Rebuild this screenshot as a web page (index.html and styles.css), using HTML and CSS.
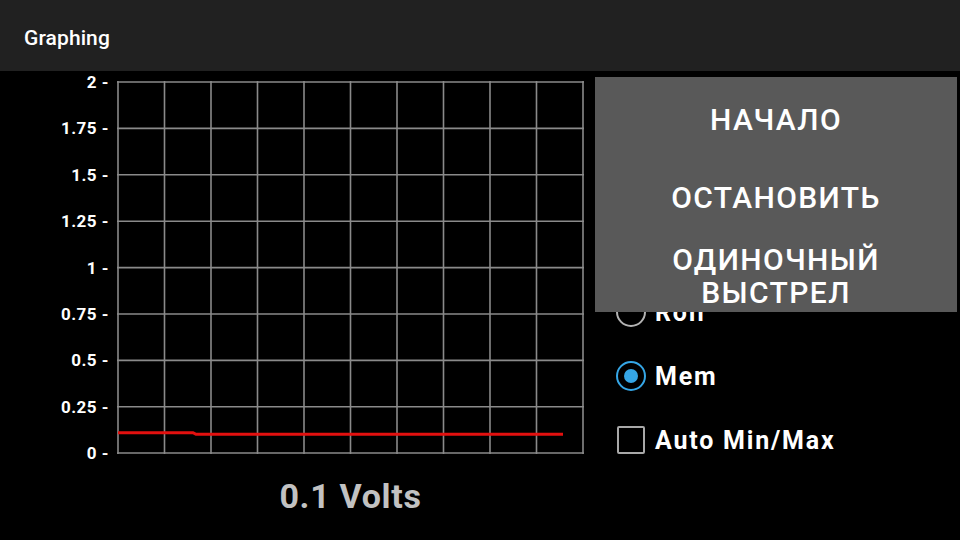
FILE: index.html
```html
<!DOCTYPE html>
<html lang="ru">
<head>
<meta charset="utf-8">
<title>Graphing</title>
<link rel="stylesheet" href="styles.css">
</head>
<body>
<header class="appbar"><h1 class="title">Graphing</h1></header>
<main class="content">
  <section class="chart">
    <div class="plot-row">
      <div class="y-axis">
        <div class="tick"><span>2 -</span></div>
        <div class="tick"><span>1.75 -</span></div>
        <div class="tick"><span>1.5 -</span></div>
        <div class="tick"><span>1.25 -</span></div>
        <div class="tick"><span>1 -</span></div>
        <div class="tick"><span>0.75 -</span></div>
        <div class="tick"><span>0.5 -</span></div>
        <div class="tick"><span>0.25 -</span></div>
        <div class="tick"><span>0 -</span></div>
      </div>
      <svg class="plot" width="467" height="373" viewBox="0 0 467 373">
        <g stroke="#8a8a8a" stroke-width="1.6" fill="none">
          <line x1="1" y1="0" x2="1" y2="373"/>
          <line x1="47.5" y1="0" x2="47.5" y2="373"/>
          <line x1="94" y1="0" x2="94" y2="373"/>
          <line x1="140.5" y1="0" x2="140.5" y2="373"/>
          <line x1="187" y1="0" x2="187" y2="373"/>
          <line x1="233.5" y1="0" x2="233.5" y2="373"/>
          <line x1="280" y1="0" x2="280" y2="373"/>
          <line x1="326.5" y1="0" x2="326.5" y2="373"/>
          <line x1="373" y1="0" x2="373" y2="373"/>
          <line x1="419.5" y1="0" x2="419.5" y2="373"/>
          <line x1="466" y1="0" x2="466" y2="373"/>
          <line x1="0" y1="1" x2="467" y2="1"/>
          <line x1="0" y1="47.4" x2="467" y2="47.4"/>
          <line x1="0" y1="93.8" x2="467" y2="93.8"/>
          <line x1="0" y1="140.2" x2="467" y2="140.2"/>
          <line x1="0" y1="186.6" x2="467" y2="186.6"/>
          <line x1="0" y1="233" x2="467" y2="233"/>
          <line x1="0" y1="279.4" x2="467" y2="279.4"/>
          <line x1="0" y1="325.8" x2="467" y2="325.8"/>
          <line x1="0" y1="372" x2="467" y2="372"/>
        </g>
        <polyline points="1,351.7 76,351.7 79,353.3 446,353.3" fill="none" stroke="#e3100f" stroke-width="3"/>
      </svg>
    </div>
    <div class="reading">0.1 Volts</div>
  </section>
  <aside class="controls">
    <ul class="options">
      <li class="option"><span class="radio"></span><span class="label">Roll</span></li>
      <li class="option"><span class="radio checked"></span><span class="label">Mem</span></li>
      <li class="option"><span class="checkbox"></span><span class="label">Auto Min/Max</span></li>
    </ul>
    <nav class="menu">
      <button class="menu-btn">НАЧАЛО</button>
      <button class="menu-btn">ОСТАНОВИТЬ</button>
      <button class="menu-btn two-line">ОДИНОЧНЫЙ<br>ВЫСТРЕЛ</button>
    </nav>
  </aside>
</main>
</body>
</html>
```
FILE: styles.css
```css
html, body {
  margin: 0;
  padding: 0;
}
body {
  width: 960px;
  height: 540px;
  overflow: hidden;
  background: #000;
  color: #fff;
  font-family: Roboto, "Liberation Sans", sans-serif;
  position: relative;
}
.appbar {
  height: 71px;
  background: #212121;
  display: flex;
  align-items: center;
  padding-left: 24px;
}
.title {
  margin: 0;
  font-size: 21px;
  font-weight: 500;
  letter-spacing: 0.1px;
  color: #fff;
  padding-top: 4px;
}
.content {
  display: flex;
}
.chart {
  width: 595px;
  padding-top: 10px;
}
.plot-row {
  display: flex;
  gap: 8px;
}
.y-axis {
  width: 109px;
  height: 371px;
  margin-top: 1px;
  display: flex;
  flex-direction: column;
  justify-content: space-between;
}
.tick {
  height: 0;
  display: flex;
  align-items: center;
  justify-content: flex-end;
}
.tick span {
  font-size: 17px;
  font-weight: 700;
  letter-spacing: 0.5px;
  white-space: nowrap;
  line-height: 20px;
}
.plot {
  display: block;
}
.reading {
  margin-left: 117px;
  width: 467px;
  text-align: center;
  font-size: 34px;
  font-weight: 700;
  letter-spacing: 0.7px;
  color: #c2c2c2;
  margin-top: 22px;
  line-height: 40px;
}
.controls {
  flex: 1;
}
.options {
  list-style: none;
  margin: 0;
  padding: 226px 0 0 21px;
  display: flex;
  flex-direction: column;
  gap: 34px;
}
.option {
  display: flex;
  align-items: center;
  gap: 9px;
  height: 30px;
}
.label {
  font-size: 25px;
  font-weight: 700;
  letter-spacing: 1.8px;
}
.radio {
  width: 30px;
  height: 30px;
  box-sizing: border-box;
  border: 2.6px solid #b3b3b3;
  border-radius: 50%;
  position: relative;
}
.radio.checked {
  border-color: #35a6e6;
}
.radio.checked::after {
  content: "";
  position: absolute;
  left: 50%;
  top: 50%;
  width: 14px;
  height: 14px;
  margin: -7px 0 0 -7px;
  border-radius: 50%;
  background: #35a6e6;
}
.checkbox {
  width: 28px;
  height: 28px;
  box-sizing: border-box;
  border: 2.6px solid #a8a8a8;
  border-radius: 2px;
  margin: 0 1px;
}
.menu {
  position: absolute;
  left: 595px;
  top: 77px;
  width: 362px;
  height: 235px;
  background: #595959;
  overflow: hidden;
  box-sizing: border-box;
  padding-top: 3px;
  display: flex;
  flex-direction: column;
}
.menu-btn {
  height: 78.5px;
  flex: none;
  border: 0;
  background: transparent;
  color: #fff;
  font-family: Roboto, "Liberation Sans", sans-serif;
  font-size: 30px;
  font-weight: 500;
  letter-spacing: 1.4px;
  line-height: 33px;
  padding: 0;
  text-align: center;
}
```
